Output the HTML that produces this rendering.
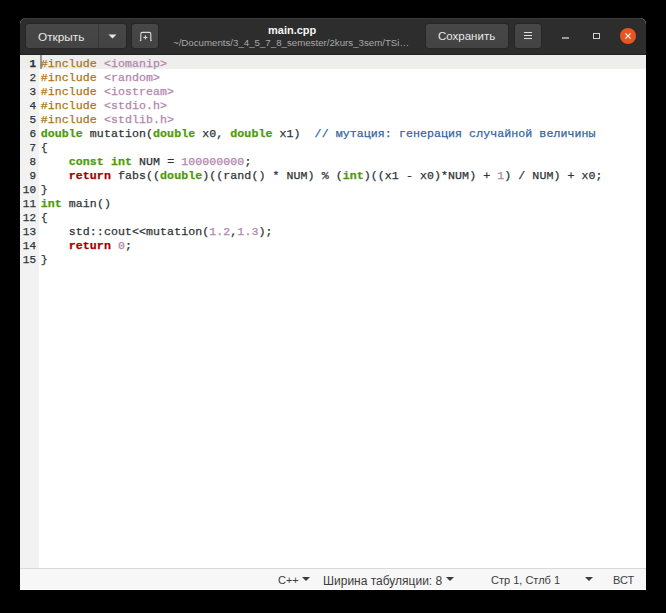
<!DOCTYPE html>
<html><head><meta charset="utf-8">
<style>
html,body{margin:0;padding:0;}
body{width:666px;height:613px;background:#000;position:relative;overflow:hidden;font-family:"Liberation Sans",sans-serif;}
#win{position:absolute;left:20px;top:18px;width:626px;height:572px;background:#fff;border-radius:6px 6px 0 0;overflow:hidden;}
#hdr{position:absolute;left:0;top:0;width:626px;height:37px;background:#2d2d2d;box-shadow:inset 0 1px 0 #3a3a3a, inset 0 -1px 0 #222;}
.btn{position:absolute;top:6px;height:24px;background:linear-gradient(#474747,#434343);border-radius:3px;box-shadow:0 0 0 1px #272727;}
.lbl{position:absolute;color:#e8e8e8;white-space:pre;}
#ed{position:absolute;left:0;top:37px;width:626px;height:513px;background:#fff;}
#gut{position:absolute;left:0;top:0;width:19px;height:513px;background:#f2f2f2;}
#cur{position:absolute;left:0;top:0;width:626px;height:14px;background:#eeeeec;}
#code{position:absolute;left:20.7px;top:1.5px;font-family:"Liberation Mono",monospace;font-size:11.6px;letter-spacing:0.066px;line-height:14px;-webkit-text-stroke:0.25px currentColor;white-space:pre;color:#2e3436;}
.ln{position:absolute;left:0;width:16px;margin-top:1.5px;text-align:right;font-family:"Liberation Mono",monospace;font-size:11px;line-height:14px;-webkit-text-stroke:0.25px currentColor;color:#2e3436;}
.pp{color:#b07310}
.st{color:#b185ac}
.ty{color:#4e9a06;font-weight:bold}
.kw{color:#a40000;font-weight:bold}
.nm{color:#b185ac}
.cm{color:#3465a4}
#sb{position:absolute;left:0;top:550px;width:626px;height:22px;background:#f7f7f7;border-top:1px solid #dadada;box-sizing:border-box;box-shadow:inset 0 -1px 0 #fdfdfd;}
.sbt{position:absolute;top:5px;color:#3c3c3c;font-size:11px;white-space:pre;}
</style></head><body>
<div id="win">
  <div id="hdr">
    <div class="btn" style="left:6px;width:100px;"></div>
    <div style="position:absolute;left:78px;top:6px;width:1px;height:24px;background:#363636;"></div>
    <div class="lbl" style="left:18px;top:12px;font-size:11.8px;">Открыть</div>
    <svg style="position:absolute;left:88px;top:16px" width="9" height="5"><path d="M0.5 0.5 L8.5 0.5 L4.5 4.5 Z" fill="#e8e8e8"/></svg>
    <div class="btn" style="left:112px;width:26px;"></div>
    <svg style="position:absolute;left:117px;top:11px" width="16" height="16" viewBox="0 0 16 16">
      <path d="M3.8 11.6 V5 Q3.8 3.4 5.4 3.4 H12.2 Q13.8 3.4 13.8 5 V11.6" fill="none" stroke="#dcdcdc" stroke-width="1.1"/>
      <path d="M2.8 11.6 H4.3 M13.3 11.6 H14.8" stroke="#dcdcdc" stroke-width="0.9"/>
      <path d="M8.4 6.4 V10.4 M6.4 8.4 H10.4" stroke="#e8e8e8" stroke-width="1"/>
    </svg>
    <div class="lbl" style="left:248px;top:6px;font-size:11px;font-weight:bold;color:#f5f5f5;">main.cpp</div>
    <div class="lbl" style="left:153px;top:19px;font-size:9.7px;color:#a8a8a8;">~/Documents/3_4_5_7_8_semester/2kurs_3sem/TSi…</div>
    <div class="btn" style="left:406px;width:82px;"></div>
    <div class="lbl" style="left:418px;top:12px;font-size:11.5px;">Сохранить</div>
    <div class="btn" style="left:495px;width:26px;"></div>
    <svg style="position:absolute;left:502px;top:11px" width="12" height="14"><path d="M2 3.5 H10 M2 6.5 H10 M2 9.5 H10" stroke="#dedede" stroke-width="1"/></svg>
    <div style="position:absolute;left:542px;top:19px;width:7px;height:2px;background:#9a9a9a;"></div>
    <div style="position:absolute;left:573px;top:15px;width:5px;height:4px;border:1px solid #cfcfcf;"></div>
    <div style="position:absolute;left:600px;top:10px;width:16px;height:16px;border-radius:50%;background:#e95420;"></div>
    <svg style="position:absolute;left:600px;top:10px" width="16" height="16"><path d="M5.4 5.4 L10.6 10.6 M10.6 5.4 L5.4 10.6" stroke="#fff" stroke-width="1.2"/></svg>
  </div>
  <div id="ed">
    <div id="gut"></div>
    <div id="cur"></div>
    <div style="position:absolute;left:20px;top:0;width:2px;height:14px;background:#999;"></div>
    <div class="ln" style="top:0;font-weight:bold">1</div>
    <div class="ln" style="top:14px">2</div>
    <div class="ln" style="top:28px">3</div>
    <div class="ln" style="top:42px">4</div>
    <div class="ln" style="top:56px">5</div>
    <div class="ln" style="top:70px">6</div>
    <div class="ln" style="top:84px">7</div>
    <div class="ln" style="top:98px">8</div>
    <div class="ln" style="top:112px">9</div>
    <div class="ln" style="top:126px">10</div>
    <div class="ln" style="top:140px">11</div>
    <div class="ln" style="top:154px">12</div>
    <div class="ln" style="top:168px">13</div>
    <div class="ln" style="top:182px">14</div>
    <div class="ln" style="top:196px">15</div>
<div id="code"><span class="pp">#include</span> <span class="st">&lt;iomanip&gt;</span>
<span class="pp">#include</span> <span class="st">&lt;random&gt;</span>
<span class="pp">#include</span> <span class="st">&lt;iostream&gt;</span>
<span class="pp">#include</span> <span class="st">&lt;stdio.h&gt;</span>
<span class="pp">#include</span> <span class="st">&lt;stdlib.h&gt;</span>
<span class="ty">double</span> mutation(<span class="ty">double</span> x0, <span class="ty">double</span> x1)  <span class="cm">// мутация: генерация случайной величины</span>
{
    <span class="ty">const</span> <span class="ty">int</span> NUM = <span class="nm">100000000</span>;
    <span class="kw">return</span> fabs((<span class="ty">double</span>)((rand() * NUM) % (<span class="ty">int</span>)((x1 - x0)*NUM) + <span class="nm">1</span>) / NUM) + x0;
}
<span class="ty">int</span> main()
{
    std::cout&lt;&lt;mutation(<span class="nm">1.2</span>,<span class="nm">1.3</span>);
    <span class="kw">return</span> <span class="nm">0</span>;
}</div>
  </div>
  <div id="sb">
    <div class="sbt" style="left:258px;">C++</div>
    <svg style="position:absolute;left:282px;top:8px" width="8" height="6"><path d="M0 0 H8 L4 4 Z" fill="#3c3c3c"/></svg>
    <div class="sbt" style="left:303px;font-size:12px;">Ширина табуляции: 8</div>
    <svg style="position:absolute;left:426px;top:8px" width="8" height="6"><path d="M0 0 H8 L4 4 Z" fill="#3c3c3c"/></svg>
    <div class="sbt" style="left:471px;">Стр 1, Стлб 1</div>
    <svg style="position:absolute;left:565px;top:8px" width="8" height="6"><path d="M0 0 H8 L4 4 Z" fill="#3c3c3c"/></svg>
    <div class="sbt" style="left:593px;">ВСТ</div>
  </div>
</div>
</body></html>
